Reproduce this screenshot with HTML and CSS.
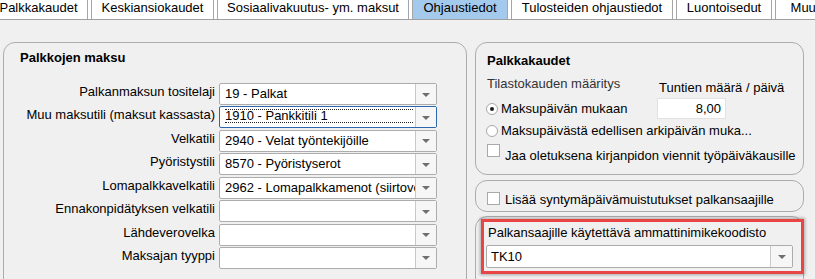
FILE: index.html
```html
<!DOCTYPE html>
<html lang="fi">
<head>
<meta charset="utf-8">
<title>Ohjaustiedot</title>
<link rel="stylesheet" href="styles.css">
</head>
<body>
<div class="tabs">
  <div class="tab t1">Palkkakaudet</div>
  <div class="tab t2">Keskiansiokaudet</div>
  <div class="tab t3">Sosiaalivakuutus- ym. maksut</div>
  <div class="tab t4 active">Ohjaustiedot</div>
  <div class="tab t5">Tulosteiden ohjaustiedot</div>
  <div class="tab t6">Luontoisedut</div>
  <div class="tab t7">Muut</div>
</div>
<div class="content">
  <div class="panel left-panel">
    <div class="title">Palkkojen maksu</div>
    <div class="form">
      <div class="label">Palkanmaksun tositelaji</div>
      <div class="combo"><div class="val">19 - Palkat</div><div class="btn"><span class="arrow"></span></div></div>
      <div class="label">Muu maksutili (maksut kassasta)</div>
      <div class="combo focused"><div class="val"><span class="focusrect">1910 - Pankkitili 1</span></div><div class="btn"><span class="arrow"></span></div></div>
      <div class="label">Velkatili</div>
      <div class="combo"><div class="val">2940 - Velat työntekijöille</div><div class="btn"><span class="arrow"></span></div></div>
      <div class="label">Pyöristystili</div>
      <div class="combo"><div class="val">8570 - Pyöristyserot</div><div class="btn"><span class="arrow"></span></div></div>
      <div class="label">Lomapalkkavelkatili</div>
      <div class="combo"><div class="val">2962 - Lomapalkkamenot (siirtovelat)</div><div class="btn"><span class="arrow"></span></div></div>
      <div class="label">Ennakonpidätyksen velkatili</div>
      <div class="combo"><div class="val"></div><div class="btn"><span class="arrow"></span></div></div>
      <div class="label">Lähdeverovelka</div>
      <div class="combo"><div class="val"></div><div class="btn"><span class="arrow"></span></div></div>
      <div class="label">Maksajan tyyppi</div>
      <div class="combo"><div class="val"></div><div class="btn"><span class="arrow"></span></div></div>
    </div>
  </div>
  <div class="right-col">
    <div class="panel box1">
      <div class="title">Palkkakaudet</div>
      <div class="period-grid">
        <div class="muted">Tilastokauden määritys</div>
        <div class="hours-label">Tuntien määrä / päivä</div>
        <label class="radio-row"><span class="radio checked"></span>Maksupäivän mukaan</label>
        <div class="num-input">8,00</div>
      </div>
      <label class="radio-row r2"><span class="radio"></span>Maksupäivästä edellisen arkipäivän muka...</label>
      <label class="check-row"><span class="check"></span>Jaa oletuksena kirjanpidon viennit työpäiväkausille</label>
    </div>
    <div class="panel box2">
      <label class="check-row"><span class="check"></span>Lisää syntymäpäivämuistutukset palkansaajille</label>
    </div>
    <div class="panel box3">
      <div class="box3-title">Palkansaajille käytettävä ammattinimikekoodisto</div>
      <div class="combo wide"><div class="val">TK10</div><div class="btn"><span class="arrow"></span></div></div>
      <div class="highlight"></div>
    </div>
  </div>
</div>
</body>
</html>
```
FILE: styles.css
```css
* { box-sizing: border-box; }
html, body {
  margin: 0;
  padding: 0;
}
body {
  width: 815px;
  height: 279px;
  overflow: hidden;
  background: #f0f0f0;
  font-family: "Liberation Sans", Arial, sans-serif;
  font-size: 13px;
  color: #000;
}

/* tabs */
.tabs {
  display: flex;
  height: 20px;
  background: #fff;
  border-bottom: 1px solid #a0a0a0;
  margin-left: -11px;
  width: 830px;
}
.tab {
  flex: none;
  height: 19px;
  line-height: 16px;
  text-align: center;
  white-space: nowrap;
  border-left: 1px solid #a6a6a6;
  border-right: 1px solid #a6a6a6;
  margin-right: 3px;
  background: #fff;
}
.t1 { width: 99px; }
.t2 { width: 123px; }
.t3 { width: 192px; }
.t4 { width: 96px; }
.t5 { width: 162px; }
.t6 { width: 96px; }
.t7 { width: 60px; }
.tab.active { background: #a3c9ec; }

/* content */
.content {
  display: flex;
  gap: 8px;
  padding: 22px 0 0 3px;
}
.panel {
  border: 1px solid #acacac;
  border-radius: 12px;
  background: #f0f0f0;
}
.title {
  font-weight: bold;
  line-height: 16px;
}
.left-panel {
  width: 464px;
  height: 260px;
  padding: 7px 0 0 16px;
  flex: none;
}
.form {
  display: grid;
  grid-template-columns: 195px 218px;
  column-gap: 4px;
  row-gap: 1.43px;
  margin-top: 17px;
}
.label {
  text-align: right;
  line-height: 16px;
  padding-top: 1px;
  white-space: nowrap;
  height: 22px;
}

/* combo */
.combo {
  display: flex;
  height: 22px;
  background: #fff;
  border: 1px solid #acacac;
  border-radius: 2px;
}
.combo .val {
  flex: 1;
  min-width: 0;
  overflow: hidden;
  white-space: nowrap;
  line-height: 20px;
  padding-left: 5px;
}
.combo .btn {
  flex: none;
  width: 21px;
  border-left: 1px solid #c9c9c9;
  background: #f6f6f6;
  display: flex;
  align-items: center;
  justify-content: center;
}
.arrow {
  width: 0;
  height: 0;
  border-left: 4px solid transparent;
  border-right: 4px solid transparent;
  border-top: 4px solid #6e6e6e;
  margin-top: 1px;
}
.combo.focused {
  border-color: #2d66ad;
}
.focusrect {
  display: block;
  margin-top: 2px;
  margin-right: 2px;
  height: 14px;
  line-height: 12px;
  border-top: 1px dotted #222;
  border-bottom: 1px dotted #222;
}

/* right column */
.right-col {
  width: 329px;
  flex: none;
  display: flex;
  flex-direction: column;
}
.box1 {
  height: 133px;
  padding: 10px 10px 0 11px;
}
.period-grid {
  display: grid;
  grid-template-columns: 170px 69px;
  grid-template-rows: 22.3px 21px;
  margin-top: 7px;
}
.muted {
  color: #333;
  line-height: 16px;
}
.hours-label {
  line-height: 16px;
  margin-top: 4px;
  padding-left: 2px;
  white-space: nowrap;
}
.radio-row {
  display: flex;
  align-items: center;
  gap: 3px;
  margin-left: -1px;
  line-height: 16px;
  white-space: nowrap;
}
.r2 {
  margin-top: 4px;
}
.radio {
  flex: none;
  width: 12px;
  height: 12px;
  border-radius: 50%;
  border: 1px solid #a8a8a8;
  background: #fff;
  position: relative;
}
.radio.checked::after {
  content: "";
  position: absolute;
  left: 3px;
  top: 3px;
  width: 4px;
  height: 4px;
  border-radius: 50%;
  background: #1e1e1e;
}
.num-input {
  height: 21px;
  background: #fff;
  border: 1px solid #e2e2e2;
  text-align: right;
  line-height: 19px;
  padding-right: 4px;
}
.check-row {
  display: flex;
  align-items: flex-start;
  gap: 5px;
  white-space: nowrap;
  line-height: 16px;
}
.box1 .check-row {
  margin-top: 9px;
}
.check {
  flex: none;
  width: 13px;
  height: 13px;
  border: 1px solid #a9a9a9;
  background: #fff;
  margin-top: -4px;
}
.box2 {
  margin-top: 5px;
  height: 32px;
  padding: 12px 10px 0 11px;
}
.box2 .check {
  margin-top: 0;
}
.box2 .check-row {
  margin-top: -1px;
}
.box3 {
  position: relative;
  margin-top: 4px;
  height: 80px;
  padding: 8px 10px 0 11px;
}
.box3-title {
  line-height: 16px;
  padding-left: 1px;
  white-space: nowrap;
}
.combo.wide {
  margin-top: 4px;
  height: 23px;
  width: 307px;
  margin-left: -1px;
}
.combo.wide .val {
  padding-left: 4px;
  line-height: 21px;
}
.combo.wide .btn {
  width: 22px;
}
.highlight {
  position: absolute;
  left: 5px;
  top: 2px;
  width: 323px;
  height: 55px;
  border: 3px solid #e84545;
  box-shadow: 0 0 3px 1px rgba(0, 0, 0, 0.3);
  pointer-events: none;
}
```
